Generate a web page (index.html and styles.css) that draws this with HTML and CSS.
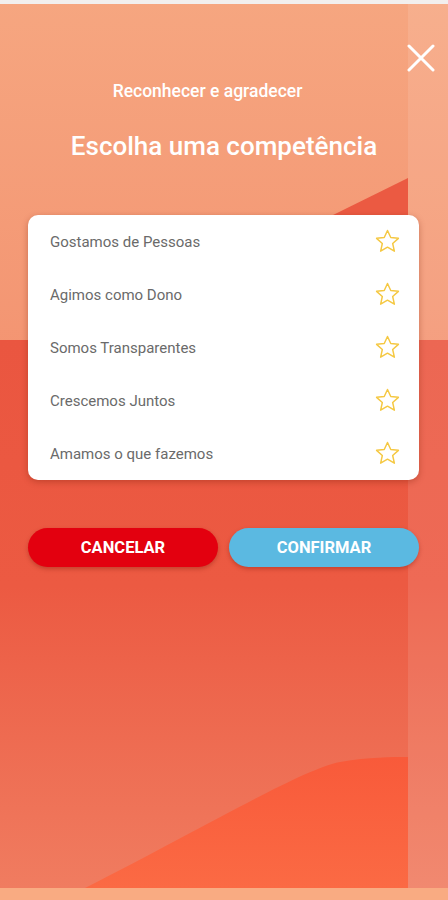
FILE: index.html
```html
<!DOCTYPE html>
<html lang="pt-BR">
<head>
    <meta charset="UTF-8">
    <meta name="viewport" content="width=device-width, initial-scale=1.0">
    <title>Reconhecer e agradecer</title>
    <link rel="stylesheet" href="styles.css">
</head>
<body>
    <svg class="backdrop" width="448" height="900" viewBox="0 0 448 900" aria-hidden="true">
        <defs>
            <linearGradient id="upper" x1="0" y1="0" x2="0" y2="1">
                <stop offset="0" stop-color="#f6a680"/>
                <stop offset="1" stop-color="#f07a5c"/>
            </linearGradient>
            <linearGradient id="lower" x1="0" y1="0" x2="0" y2="1">
                <stop offset="0" stop-color="#ea5640"/>
                <stop offset="0.45" stop-color="#ec5a42"/>
                <stop offset="1" stop-color="#f07c60"/>
            </linearGradient>
            <linearGradient id="wave" x1="0" y1="0" x2="0" y2="1">
                <stop offset="0" stop-color="#f85a3a"/>
                <stop offset="1" stop-color="#fb6a44"/>
            </linearGradient>
        </defs>
        <rect x="0" y="0" width="448" height="900" fill="url(#upper)"/>
        <rect x="0" y="340" width="448" height="548" fill="url(#lower)"/>
        <polygon points="80,340 408,178 408,340" fill="#eb5a42"/>
        <path d="M85 888 C 200 830, 300 770, 340 762 C 370 757, 390 757, 408 757 L408 888 Z" fill="url(#wave)"/>
        <rect x="408" y="0" width="40" height="888" fill="#ffffff" opacity="0.1"/>
        <rect x="0" y="888" width="448" height="12" fill="#f9ab82"/>
        <rect x="0" y="0" width="448" height="4" fill="#f2efee"/>
    </svg>

    <button class="close" aria-label="Fechar">
        <svg width="28" height="28" viewBox="0 0 28 28">
            <path d="M2 2 L26 26 M26 2 L2 26" stroke="#fff" stroke-width="3" stroke-linecap="round"/>
        </svg>
    </button>

    <div class="screen">
        <p class="subtitle">Reconhecer e agradecer</p>
        <h1 class="title">Escolha uma competência</h1>

        <ul class="card">
            <li class="row"><span>Gostamos de Pessoas</span><svg class="star" viewBox="0 0 24 24"><path d="M12 2.2l2.9 6.3 6.8.7-5.1 4.6 1.5 6.8L12 17.1l-6.1 3.5 1.5-6.8-5.1-4.6 6.8-.7z"/></svg></li>
            <li class="row"><span>Agimos como Dono</span><svg class="star" viewBox="0 0 24 24"><path d="M12 2.2l2.9 6.3 6.8.7-5.1 4.6 1.5 6.8L12 17.1l-6.1 3.5 1.5-6.8-5.1-4.6 6.8-.7z"/></svg></li>
            <li class="row"><span>Somos Transparentes</span><svg class="star" viewBox="0 0 24 24"><path d="M12 2.2l2.9 6.3 6.8.7-5.1 4.6 1.5 6.8L12 17.1l-6.1 3.5 1.5-6.8-5.1-4.6 6.8-.7z"/></svg></li>
            <li class="row"><span>Crescemos Juntos</span><svg class="star" viewBox="0 0 24 24"><path d="M12 2.2l2.9 6.3 6.8.7-5.1 4.6 1.5 6.8L12 17.1l-6.1 3.5 1.5-6.8-5.1-4.6 6.8-.7z"/></svg></li>
            <li class="row"><span>Amamos o que fazemos</span><svg class="star" viewBox="0 0 24 24"><path d="M12 2.2l2.9 6.3 6.8.7-5.1 4.6 1.5 6.8L12 17.1l-6.1 3.5 1.5-6.8-5.1-4.6 6.8-.7z"/></svg></li>
        </ul>

        <div class="actions">
            <button class="btn cancel">CANCELAR</button>
            <button class="btn confirm">CONFIRMAR</button>
        </div>
    </div>
</body>
</html>
```

FILE: styles.css
```css
body {
    margin: 0;
    font-family: Roboto, "Liberation Sans", sans-serif;
    width: 448px;
    height: 900px;
    overflow: hidden;
    position: relative;
}
.backdrop {
    position: absolute;
    top: 0;
    left: 0;
    z-index: -1;
}
.close {
    position: absolute;
    top: 44px;
    left: 407px;
    width: 28px;
    height: 28px;
    padding: 0;
    border: none;
    background: none;
}
.screen {
    padding-top: 81px;
}
.subtitle {
    margin: 0;
    padding-right: 33px;
    text-align: center;
    color: #fff;
    font-size: 17.5px;
    font-weight: 500;
    line-height: 20px;
}
.title {
    margin: 30px 0 0;
    text-align: center;
    color: #fff;
    font-size: 26px;
    font-weight: 500;
    line-height: 30px;
}
.card {
    list-style: none;
    margin: 54px 29px 0 28px;
    padding: 0;
    background: #fff;
    border-radius: 10px;
    box-shadow: 0 2px 6px rgba(120, 30, 10, 0.35);
}
.row {
    height: 53px;
    display: flex;
    align-items: center;
    justify-content: space-between;
    padding: 0 18px 0 22px;
    color: #6a6a6a;
    font-size: 15px;
}
.star {
    width: 27px;
    height: 27px;
    fill: none;
    stroke: #f5c842;
    stroke-width: 1.3;
    stroke-linejoin: round;
}
.actions {
    display: flex;
    gap: 11px;
    margin: 48px 29px 0 28px;
}
.btn {
    flex: 1;
    height: 39px;
    border: none;
    border-radius: 20px;
    color: #fff;
    font-family: Roboto, "Liberation Sans", sans-serif;
    font-size: 16.5px;
    font-weight: 700;
    box-shadow: 0 2px 4px rgba(120, 20, 10, 0.35);
}
.cancel {
    background: #e3000f;
}
.confirm {
    background: #5bb9e1;
}
```
